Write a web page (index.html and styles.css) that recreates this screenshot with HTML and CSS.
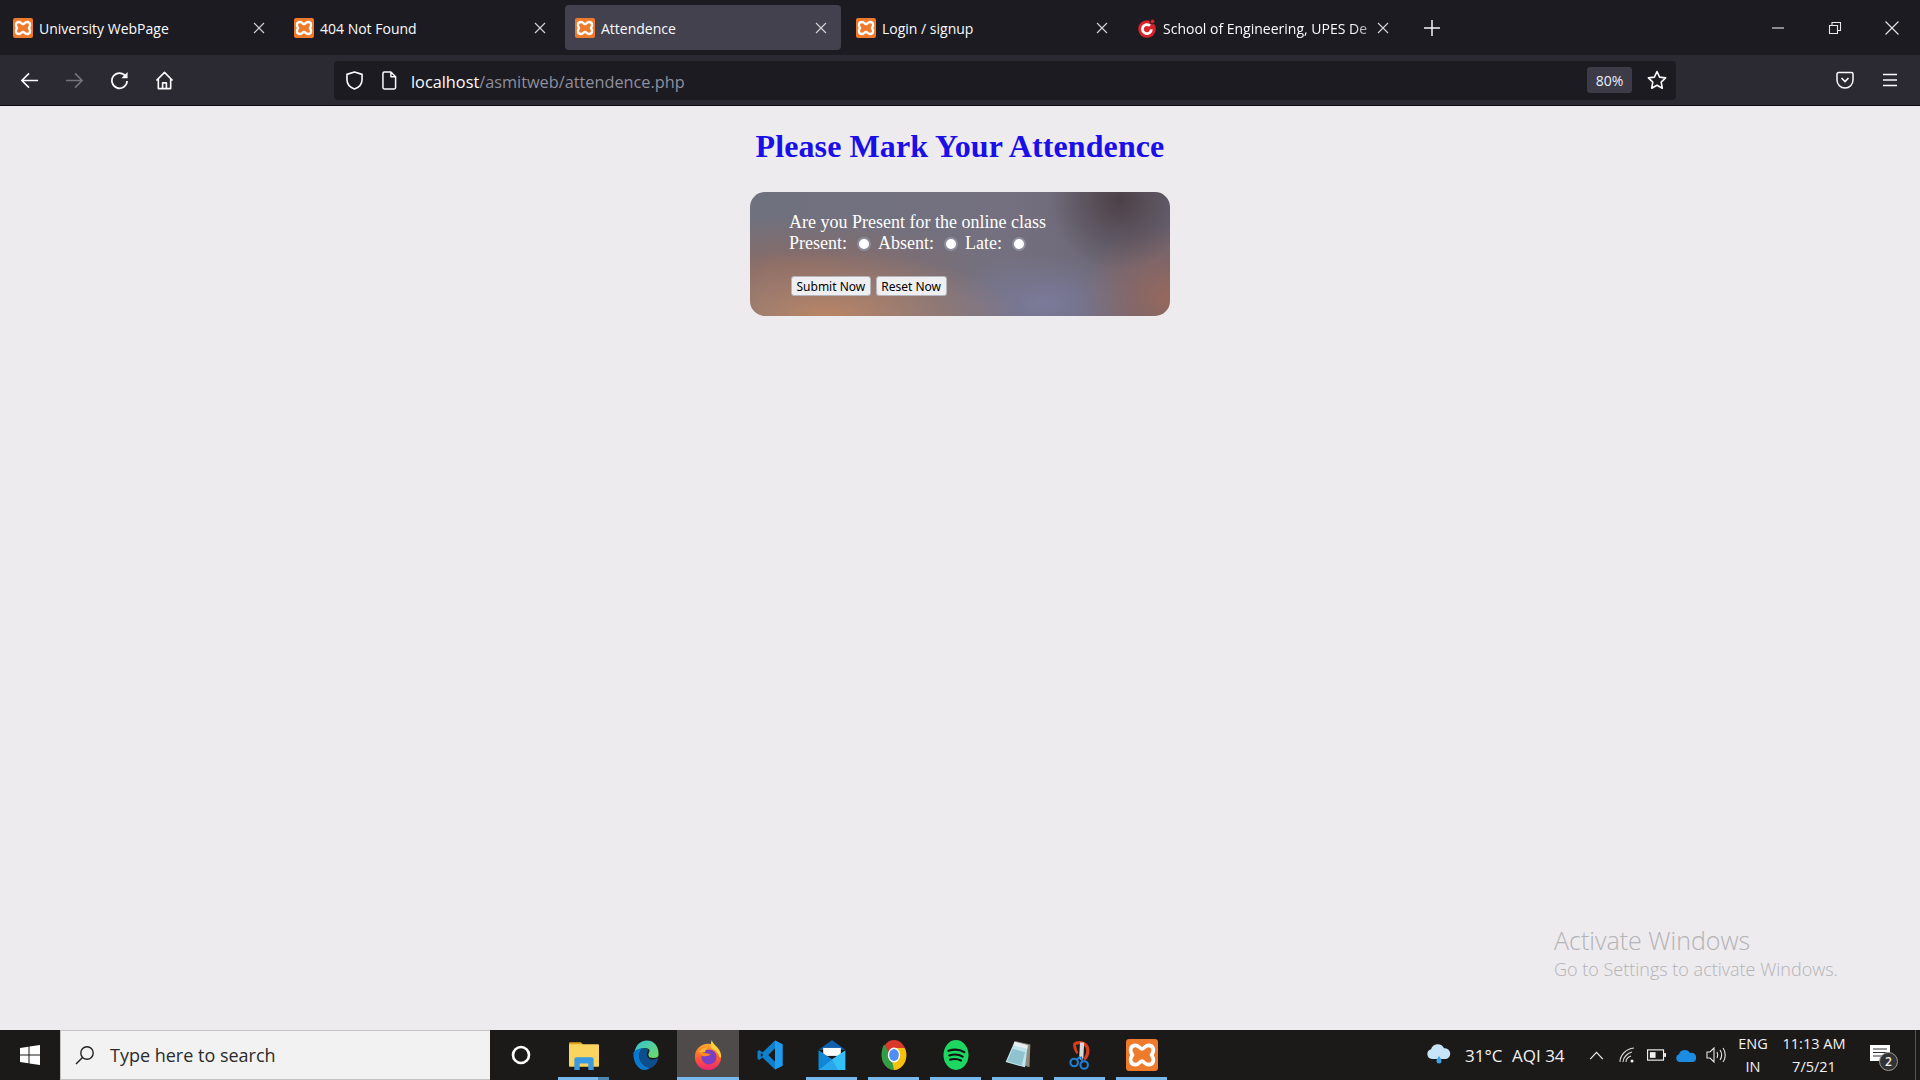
FILE: index.html
```html
<!DOCTYPE html>
<html lang="en">
<head>
    <meta charset="UTF-8">
    <title>Attendence</title>
    <link rel="stylesheet" href="styles.css">
</head>
<body>
    <svg class="defs" width="0" height="0">
        <symbol id="xampp" viewBox="0 0 20 20" preserveAspectRatio="none">
            <rect width="20" height="20" rx="2" fill="#ee7a2b"/>
            <path d="M6 4c-3.200 0-4 3-2 6-2 3-1.200 6 2 6 2.200 0 2.800-2.200 4-2.200s1.800 2.200 4 2.200c3.200 0 4-3 2-6 2-3 1.200-6-2-6-2.200 0-2.800 2.200-4 2.200S8.200 4 6 4z" fill="none" stroke="#fff" stroke-width="2.300"/>
        </symbol>
        <symbol id="close" viewBox="0 0 12 12">
            <path d="M1 1l10 10M11 1L1 11" stroke="#d6d6da" stroke-width="1.100" fill="none"/>
        </symbol>
    </svg>

    <div class="tabstrip">
        <div class="tab">
            <svg class="favicon"><use href="#xampp"/></svg>
            <span class="tab-title">University WebPage</span>
            <svg class="tab-close"><use href="#close"/></svg>
        </div>
        <div class="tab">
            <svg class="favicon"><use href="#xampp"/></svg>
            <span class="tab-title">404 Not Found</span>
            <svg class="tab-close"><use href="#close"/></svg>
        </div>
        <div class="tab active">
            <svg class="favicon"><use href="#xampp"/></svg>
            <span class="tab-title">Attendence</span>
            <svg class="tab-close"><use href="#close"/></svg>
        </div>
        <div class="tab">
            <svg class="favicon"><use href="#xampp"/></svg>
            <span class="tab-title">Login / signup</span>
            <svg class="tab-close"><use href="#close"/></svg>
        </div>
        <div class="tab last">
            <svg class="favicon" viewBox="0 0 20 20">
                <circle cx="10" cy="11" r="8.800" fill="#d8232a"/>
                <path d="M13 7.800a4.500 4.500 0 1 0 1.400 3.600" fill="none" stroke="#fff" stroke-width="2.800"/>
                <circle cx="15.500" cy="3.500" r="2.400" fill="#d8232a" stroke="#1c1b22"/>
            </svg>
            <span class="tab-title fade">School of Engineering, UPES De</span>
            <svg class="tab-close"><use href="#close"/></svg>
        </div>
        <svg class="new-tab" viewBox="0 0 16 16"><path d="M8 0v16M0 8h16" stroke="#f4f4f6" stroke-width="1.500"/></svg>
        <div class="window-btns">
            <svg viewBox="0 0 14 14"><path d="M1 7h12" stroke="#e8e8ea" stroke-width="1.100"/></svg>
            <svg viewBox="0 0 14 14"><path d="M1.500 4.500h8v8h-8zM4 4.500v-3h8.500v8h-3" fill="none" stroke="#e8e8ea" stroke-width="1.100"/></svg>
            <svg viewBox="0 0 14 14"><path d="M.5.500l13 13M13.500.500l-13 13" stroke="#e8e8ea" stroke-width="1.100"/></svg>
        </div>
    </div>

    <div class="toolbar">
        <div class="nav-btns">
            <svg viewBox="0 0 20 20"><path d="M19 10H2M9.500 2.500L2 10l7.500 7.500" fill="none" stroke="#fbfbfe" stroke-width="1.700"/></svg>
            <svg viewBox="0 0 20 20"><path d="M1 10h17M10.500 2.500L18 10l-7.500 7.500" fill="none" stroke="#74737a" stroke-width="1.700"/></svg>
            <svg viewBox="0 0 20 20"><path d="M16.500 5.500A8 8 0 1 0 18 10.500" fill="none" stroke="#fbfbfe" stroke-width="1.800"/><path d="M18.500 1v6.500H12z" fill="#fbfbfe"/></svg>
            <svg viewBox="0 0 20 20"><path d="M1.500 10L10 1.500l8.500 8.500M3.500 8.500V18.500h13V8.500M8 18.500v-6h4v6" fill="none" stroke="#fbfbfe" stroke-width="1.700" stroke-linejoin="round"/></svg>
        </div>
        <div class="urlbar">
            <svg class="shield" viewBox="0 0 18 20"><path d="M9 1l8 2.500V9c0 5-3.500 8.500-8 10C4.500 17.500 1 14 1 9V3.500z" fill="none" stroke="#fbfbfe" stroke-width="1.700" stroke-linejoin="round"/></svg>
            <svg class="page-icon" viewBox="0 0 16 20"><path d="M2.500 1h7l5 5v11.500a1.500 1.500 0 0 1-1.500 1.500H2.500A1.500 1.500 0 0 1 1 17.500v-15A1.500 1.500 0 0 1 2.500 1zM9.500 1v5h5" fill="none" stroke="#fbfbfe" stroke-width="1.600" stroke-linejoin="round"/></svg>
            <span class="url"><span class="host">localhost</span>/asmitweb/attendence.php</span>
            <span class="zoom-badge">80%</span>
            <svg class="star" viewBox="0 0 20 20"><path d="M10 1.500l2.600 5.600 6 .8-4.400 4.200 1.100 6.100L10 15.200l-5.300 3 1.100-6.100L1.400 7.900l6-.8z" fill="none" stroke="#fbfbfe" stroke-width="1.600" stroke-linejoin="round"/></svg>
        </div>
        <div class="menu-btns">
            <svg viewBox="0 0 18 18"><path d="M2.500 1.500h13A1.500 1.500 0 0 1 17 3v6a8 8 0 0 1-16 0V3a1.500 1.500 0 0 1 1.500-1.500z" fill="none" stroke="#fbfbfe" stroke-width="1.500"/><path d="M5.500 7L9 10.500 12.500 7" fill="none" stroke="#fbfbfe" stroke-width="1.600"/></svg>
            <svg viewBox="0 0 18 18"><path d="M2 3.500h14M2 9h14M2 14.500h14" stroke="#fbfbfe" stroke-width="1.600"/></svg>
        </div>
    </div>

    <div class="page">
        <h1>Please Mark Your Attendence</h1>
        <form class="panel">
            <p class="question">Are you Present for the online class</p>
            <div class="choices">
                <label>Present:</label><input type="radio" name="status">
                <label>Absent:</label><input type="radio" name="status">
                <label>Late:</label><input type="radio" name="status">
            </div>
            <div class="actions">
                <button type="button">Submit Now</button>
                <button type="button">Reset Now</button>
            </div>
        </form>
        <div class="watermark">
            <div class="wm-title">Activate Windows</div>
            <div class="wm-sub">Go to Settings to activate Windows.</div>
        </div>
    </div>

    <div class="taskbar">
        <div class="start">
            <svg viewBox="0 0 20 20"><path d="M0 3l8.500-1.200v7.700H0zM9.500 1.600L20 0v9.500H9.500zM0 10.500h8.500v7.700L0 17zM9.500 10.500H20V20L9.500 18.400z" fill="#fff"/></svg>
        </div>
        <div class="search">
            <svg viewBox="0 0 20 20"><circle cx="12" cy="8" r="6.200" fill="none" stroke="#222" stroke-width="1.400"/><path d="M7.500 12.500L1 19" stroke="#222" stroke-width="1.500"/></svg>
            <span>Type here to search</span>
        </div>
        <div class="cortana"><svg viewBox="0 0 20 20"><circle cx="10" cy="10" r="8" fill="none" stroke="#fff" stroke-width="2.600"/></svg></div>
        <div class="task-icons">
            <div class="task open split">
                <svg viewBox="0 0 28 28">
                    <path d="M0 3a1 1 0 0 1 1-1h10l3 3H0z" fill="#e0a21c"/>
                    <rect y="4" width="28" height="21" rx="1" fill="#fbd35f"/>
                    <path d="M5 28V18a2 2 0 0 1 2-2h14a2 2 0 0 1 2 2v10h-5v-6h-8v6z" fill="#3b9be0"/>
                </svg>
            </div>
            <div class="task">
                <svg viewBox="0 0 32 36">
                    <defs>
                        <linearGradient id="edge-a" x1="0" y1="0" x2="1" y2="1"><stop offset="0" stop-color="#36c2d6"/><stop offset="1" stop-color="#6fdc63"/></linearGradient>
                    </defs>
                    <path d="M2 15C4 5 10 .500 17 .500 26 .500 32 8 31 19c-1 3-7 3-10 2-2-1-3-4-1-7 1-2-1-4-5-4C9 10 4 12 2 15z" fill="url(#edge-a)"/>
                    <path d="M1 15c3-4 8-5 12-5-3 1-5 4-5 9 0 7 5 13 13 15-2 1-4 2-7 2C7 36 0 27 1 15z" fill="#0b78cf"/>
                    <path d="M8 19c0-4 2-8 5-9 3 0 6 1 6 3-3 2-3 8 2 10 4 1 8 0 10-2-1 6-5 11-10 13C13 32 8 26 8 19z" fill="#0d4f8c"/>
                </svg>
            </div>
            <div class="task open current">
                <svg viewBox="0 0 30 32">
                    <defs>
                        <linearGradient id="fox-a" x1="0" y1="0" x2="0" y2="1"><stop offset="0" stop-color="#ffa92e"/><stop offset=".55" stop-color="#ff5a2f"/><stop offset="1" stop-color="#f0237a"/></linearGradient>
                    </defs>
                    <circle cx="15" cy="18" r="14" fill="url(#fox-a)"/>
                    <path d="M19 0c1 5 9 8 10 17 0 2-1 2-2 1-1-6-7-8-9-10 0-3 0-5 1-8z" fill="#ffd23f"/>
                    <circle cx="16" cy="18" r="8" fill="#7a3fc4"/>
                    <path d="M4 9c2 3 5 5 9 5l5 1c-2 2-5 3-9 2C6 15 4 13 4 9z" fill="#ff8a24"/>
                    <path d="M5 13c3-4 7-5 10-5-2 1-3 3-3 5z" fill="#ffb52e"/>
                </svg>
            </div>
            <div class="task">
                <svg viewBox="0 0 30 36">
                    <path d="M21 .500L30 5v26l-9 4.500L6 21l-4 3-2-1.500v-9L2 12l4 3z" fill="#0f80cc"/>
                    <path d="M21 .500L30 5v26l-9 4.500z" fill="#1f9cf0"/>
                    <path d="M21 10v16l-8-8z" fill="#1b1a19"/>
                    <path d="M4 15.500l3 2.500-3 2.500z" fill="#1b1a19"/>
                </svg>
            </div>
            <div class="task open">
                <svg viewBox="0 0 30 34">
                    <path d="M15 0L30 11H0z" fill="#0e5fb0"/>
                    <path d="M5 9h20v9H5z" fill="#fff"/>
                    <path d="M0 12l15 10 15-10v22H0z" fill="#28a8ea"/>
                    <path d="M0 34V12l15 10z" fill="#0f86d6"/>
                    <path d="M30 12v22h-8l-7-12z" fill="#35c0f5"/>
                </svg>
            </div>
            <div class="task open">
                <svg viewBox="0 0 28 34">
                    <ellipse cx="14" cy="17" rx="14" ry="17" fill="#d8392b"/>
                    <path d="M14 34c8 0 14-8 14-17 0-3-.500-5-2-8H14l-7 12z" fill="#f4c20d"/>
                    <path d="M0 17C0 10 2 6 3 5l8 15 3 14C6 34 0 26 0 17z" fill="#2f9e44"/>
                    <ellipse cx="14" cy="17" rx="7" ry="8.500" fill="#fff"/>
                    <ellipse cx="14" cy="17" rx="5.500" ry="6.800" fill="#4f8ef7"/>
                </svg>
            </div>
            <div class="task open">
                <svg viewBox="0 0 30 36">
                    <ellipse cx="15" cy="18" rx="15" ry="18" fill="#1ed760"/>
                    <path d="M6 13c6-2 13-2 19 1.500M7 18.500c5-1.500 11-1.500 16 1.500M8 23.500c4-1 9-1 13 1" fill="none" stroke="#111" stroke-width="2.600" stroke-linecap="round"/>
                </svg>
            </div>
            <div class="task open">
                <svg viewBox="0 0 28 34">
                    <path d="M10 1l18 4-1 26-8-3z" fill="#8d8a7d"/>
                    <path d="M10 2l15 4-3 25L0 25z" fill="#bfe3ea"/>
                    <path d="M10 2l15 4-.500 4-15.500-4z" fill="#e8eef0"/>
                    <path d="M8 10l14 4-4 15L2 24z" fill="#8fc3cf"/>
                </svg>
            </div>
            <div class="task open">
                <svg viewBox="0 0 28 36">
                    <path d="M6 4c4-4 14-4 18 3 3 6 1 14-4 18l-2-3c3-4 5-9 2-14-2-3-8-4-11-2 1 3 1 6 3 9l-2 2C7 13 5 8 6 4z" fill="#d8401c"/>
                    <path d="M14 3h5l-1 19-2 3-3-3z" fill="#d9d9d9"/>
                    <circle cx="7" cy="27" r="4.500" fill="none" stroke="#1f7fd0" stroke-width="2.500"/>
                    <circle cx="19" cy="30" r="4.500" fill="none" stroke="#1f7fd0" stroke-width="2.500"/>
                    <path d="M10 24l4-4M17 25l-2-5" stroke="#1f7fd0" stroke-width="2.500"/>
                </svg>
            </div>
            <div class="task open">
                <svg class="task-xampp"><use href="#xampp"/></svg>
            </div>
        </div>

        <div class="tray">
            <svg class="weather" viewBox="0 0 26 22">
                <path d="M6 15a5 5 0 0 1-1-9.800 7 7 0 0 1 13-1A5.500 5.500 0 0 1 20 15z" fill="#c8e4f8"/>
                <path d="M13 12c1.500 2 2.500 3.500 2.500 5a2.500 2.500 0 0 1-5 0c0-1.500 1-3 2.500-5z" fill="#3da2e8"/>
            </svg>
            <span class="temp">31°C</span>
            <span class="aqi">AQI 34</span>
            <svg class="chevron" viewBox="0 0 16 10"><path d="M1 9l7-7.500L15 9" fill="none" stroke="#f2f2f2" stroke-width="1.300"/></svg>
            <svg class="wifi" viewBox="0 0 16 16"><path d="M1 15C1 8 7 2 15 1M4 15c0-5 5-9 9-10M7 15c0-3 2-5 5-6" fill="none" stroke="#d8d8d8" stroke-width="1.100"/><circle cx="13" cy="14" r="1.500" fill="#f2f2f2"/></svg>
            <svg class="battery" viewBox="0 0 20 12"><rect x=".6" y=".6" width="16.800" height="10.800" fill="none" stroke="#f2f2f2" stroke-width="1.200"/><rect x="3" y="3" width="6" height="6" fill="#f2f2f2"/><rect x="18" y="4" width="2" height="4" fill="#f2f2f2"/></svg>
            <svg class="onedrive" viewBox="0 0 20 13"><path d="M4 13a4 4 0 0 1-1-7.800A6 6 0 0 1 14 4a4.500 4.500 0 0 1 6 5 4 4 0 0 1-3 4z" fill="#1c8ce3"/></svg>
            <svg class="speaker" viewBox="0 0 20 16"><path d="M1 5h3l4-4v14l-4-4H1z" fill="none" stroke="#e6e6e6" stroke-width="1.100"/><path d="M11 5c1 2 1 4 0 6M14 3c2 3 2 7 0 10M17 1c3 4 3 10 0 14" fill="none" stroke="#e6e6e6" stroke-width="1.100"/></svg>
            <div class="lang"><span>ENG</span><span>IN</span></div>
            <div class="clock"><span>11:13 AM</span><span>7/5/21</span></div>
            <div class="notify">
                <svg viewBox="0 0 20 20"><path d="M0 0h20v16H0z" fill="#fff"/><path d="M3 4h14M3 7.500h14M3 11h10" stroke="#333" stroke-width="1.200"/></svg>
                <span class="badge">2</span>
            </div>
            <div class="show-desktop"></div>
        </div>
    </div>
</body>
</html>
```

FILE: styles.css
```css
html, body {
    margin: 0;
    padding: 0;
    height: 100%;
}
body {
    width: 1920px;
    height: 1080px;
    overflow: hidden;
    display: flex;
    flex-direction: column;
    font-family: "Open Sans", Arial, sans-serif;
    background-color: #edebee;
}
svg {
    display: block;
    flex: none;
}
.defs {
    position: absolute;
}

/* tabs */
.tabstrip {
    height: 55px;
    flex: none;
    display: flex;
    align-items: center;
    background-color: #1c1b22;
    padding-left: 3px;
    gap: 5px;
    color: #fbfbfe;
}
.tab {
    width: 276px;
    height: 45px;
    box-sizing: border-box;
    padding: 0 14px 0 10px;
    border-radius: 4px;
    display: flex;
    align-items: center;
}
.tab.active {
    background-color: #42414d;
}
.favicon {
    width: 20px;
    height: 20px;
    margin-right: 6px;
}
.tab-title {
    flex: 1;
    font-size: 14px;
    line-height: 20px;
    padding-top: 2px;
    white-space: nowrap;
}
.tab-title.fade {
    -webkit-mask-image: linear-gradient(to right, #000 88%, rgba(0, 0, 0, 0.35) 100%);
    mask-image: linear-gradient(to right, #000 88%, rgba(0, 0, 0, 0.35) 100%);
}
.tab-close {
    width: 12px;
    height: 12px;
}
.new-tab {
    width: 16px;
    height: 16px;
    margin-left: 16px;
}
.window-btns {
    margin-left: auto;
    display: flex;
    align-items: center;
    gap: 43px;
    padding-right: 21px;
}
.window-btns svg {
    width: 14px;
    height: 14px;
}

/* toolbar */
.toolbar {
    height: 50px;
    flex: none;
    display: flex;
    align-items: center;
    background-color: #2b2a33;
    border-bottom: 1px solid #0c0c0d;
}
.nav-btns {
    width: 334px;
    box-sizing: border-box;
    padding-left: 20px;
    display: flex;
    align-items: center;
    gap: 26px;
}
.nav-btns svg {
    width: 19px;
    height: 19px;
}
.urlbar {
    width: 1342px;
    height: 39px;
    box-sizing: border-box;
    background-color: #1c1b22;
    border-radius: 4px;
    display: flex;
    align-items: center;
    padding-left: 12px;
}
.shield {
    width: 17px;
    height: 19px;
}
.page-icon {
    width: 15px;
    height: 19px;
    margin-left: 19px;
}
.url {
    margin-left: 14px;
    padding-top: 3px;
    font-size: 16.3px;
    color: #8f8f9d;
    flex: 1;
}
.host {
    color: #fbfbfe;
}
.zoom-badge {
    width: 45px;
    height: 26px;
    background-color: #3c3b47;
    border-radius: 3px;
    font-size: 14px;
    line-height: 28px;
    text-align: center;
    color: #e8f0ff;
}
.star {
    width: 20px;
    height: 20px;
    margin: 0 9px 0 15px;
}
.menu-btns {
    margin-left: auto;
    display: flex;
    align-items: center;
    gap: 27px;
    padding-right: 21px;
}
.menu-btns svg {
    width: 18px;
    height: 18px;
}

/* page */
.page {
    flex: 1;
    position: relative;
    display: flex;
    flex-direction: column;
    align-items: center;
}
h1 {
    margin: 22px 0 0;
    font-family: "Liberation Serif", "Times New Roman", serif;
    font-size: 32px;
    line-height: 37px;
    letter-spacing: 0.1px;
    font-weight: bold;
    color: #1a0fe8;
}
.panel {
    width: 420px;
    height: 124px;
    box-sizing: border-box;
    margin-top: 27px;
    padding: 20px 39px 0;
    border-radius: 15px;
    font-family: "Liberation Serif", "Times New Roman", serif;
    font-size: 18px;
    line-height: 21px;
    color: #fff;
    background-color: #77778a;
    background-image:
        radial-gradient(ellipse 70px 70px at 88% 6%, #4c4047 0%, rgba(76, 64, 71, 0) 100%),
        radial-gradient(ellipse 90px 75px at 100% 85%, #97685d 0%, rgba(151, 104, 93, 0) 100%),
        radial-gradient(ellipse 190px 65px at 18% 100%, #bb8566 0%, rgba(187, 133, 102, 0) 100%),
        radial-gradient(ellipse 200px 50px at 10% 60%, #8a6b66 0%, rgba(138, 107, 102, 0) 100%),
        radial-gradient(ellipse 100px 50px at 70% 90%, #7a7a9a 0%, rgba(122, 122, 154, 0) 100%),
        linear-gradient(to right, #6f717e, #74707f 60%, #686372);
}
.question {
    margin: 0;
}
.choices {
    display: flex;
    align-items: center;
}
.choices input {
    appearance: none;
    -webkit-appearance: none;
    width: 14px;
    height: 14px;
    margin: 1px 7px 0 10px;
    box-sizing: border-box;
    border-radius: 50%;
    border: 2px solid #8d8d9b;
    background-color: #fff;
}
.actions {
    display: flex;
    gap: 5px;
    margin: 22px 0 0 2px;
}
.actions button {
    height: 20px;
    padding: 0 4.5px;
    font-family: "Noto Sans", Tahoma, sans-serif;
    font-size: 12px;
    color: #000;
    background-color: #efeff1;
    border: 1px solid #b5b5bd;
    border-radius: 3px;
}
.watermark {
    position: absolute;
    left: 1554px;
    top: 818px;
    color: #b4b3b6;
    font-weight: 300;
}
.wm-title {
    font-size: 25px;
    line-height: 32px;
}
.wm-sub {
    font-size: 18px;
    line-height: 26px;
}

/* taskbar */
.taskbar {
    height: 50px;
    flex: none;
    display: flex;
    align-items: center;
    background-color: #1b1a19;
    color: #f2f2f2;
}
.start {
    width: 60px;
    display: flex;
    justify-content: center;
}
.start svg {
    width: 20px;
    height: 20px;
}
.search {
    width: 430px;
    height: 50px;
    box-sizing: border-box;
    background-color: #f2f2f2;
    border-top: 1px solid #c4c4c4;
    border-bottom: 1px solid #c4c4c4;
    border-left: 1px solid #c4c4c4;
    display: flex;
    align-items: center;
    color: #2b2b2b;
    font-size: 18px;
    padding-left: 14px;
}
.search svg {
    width: 20px;
    height: 20px;
    margin-right: 15px;
}
.cortana {
    width: 61px;
    margin-right: 2px;
    display: flex;
    justify-content: center;
}
.cortana svg {
    width: 20px;
    height: 20px;
}
.task-icons {
    display: flex;
}
.task {
    width: 62px;
    height: 50px;
    box-sizing: border-box;
    position: relative;
    display: flex;
    align-items: center;
    justify-content: center;
}
.task svg {
    width: 30px;
    height: 30px;
}
.task svg.task-xampp {
    width: 32px;
    height: 32px;
}
.task.open::after {
    content: "";
    position: absolute;
    left: 5px;
    right: 6px;
    bottom: 0;
    height: 3px;
    background-color: #76b9ed;
}
.task.split::after {
    background-image: linear-gradient(to right, #76b9ed 40px, #4d85b0 40px);
}
.task.current {
    background-color: #4e4b4a;
}
.task.current::after {
    left: 0;
    right: 0;
}
.tray {
    margin-left: auto;
    display: flex;
    align-items: center;
    height: 50px;
    font-size: 17px;
}
.weather {
    width: 26px;
    height: 22px;
    margin-right: 13px;
}
.temp {
    width: 47px;
}
.aqi {
    width: 55px;
    margin-right: 22px;
}
.chevron {
    width: 15px;
    height: 9px;
    margin-right: 15px;
}
.wifi {
    width: 16px;
    height: 16px;
    margin-right: 12px;
}
.battery {
    width: 19px;
    height: 12px;
    margin-right: 10px;
}
.onedrive {
    width: 20px;
    height: 13px;
    margin-right: 10px;
}
.speaker {
    width: 20px;
    height: 16px;
    margin-right: 12px;
}
.lang,
.clock {
    display: flex;
    flex-direction: column;
    align-items: center;
    font-size: 14.5px;
    line-height: 23px;
}
.lang {
    width: 30px;
    margin-right: 7px;
}
.clock {
    width: 78px;
    margin-right: 17px;
}
.notify {
    position: relative;
    width: 20px;
    height: 20px;
    margin-right: 25px;
}
.notify svg {
    width: 20px;
    height: 20px;
}
.badge {
    position: absolute;
    left: 9px;
    top: 7px;
    width: 19px;
    height: 19px;
    box-sizing: border-box;
    border-radius: 50%;
    border: 1px solid #999;
    background-color: #333;
    font-size: 12px;
    font-weight: 600;
    line-height: 17px;
    text-align: center;
}
.show-desktop {
    width: 1px;
    height: 50px;
    background-color: #555;
    margin-right: 4px;
}
```
